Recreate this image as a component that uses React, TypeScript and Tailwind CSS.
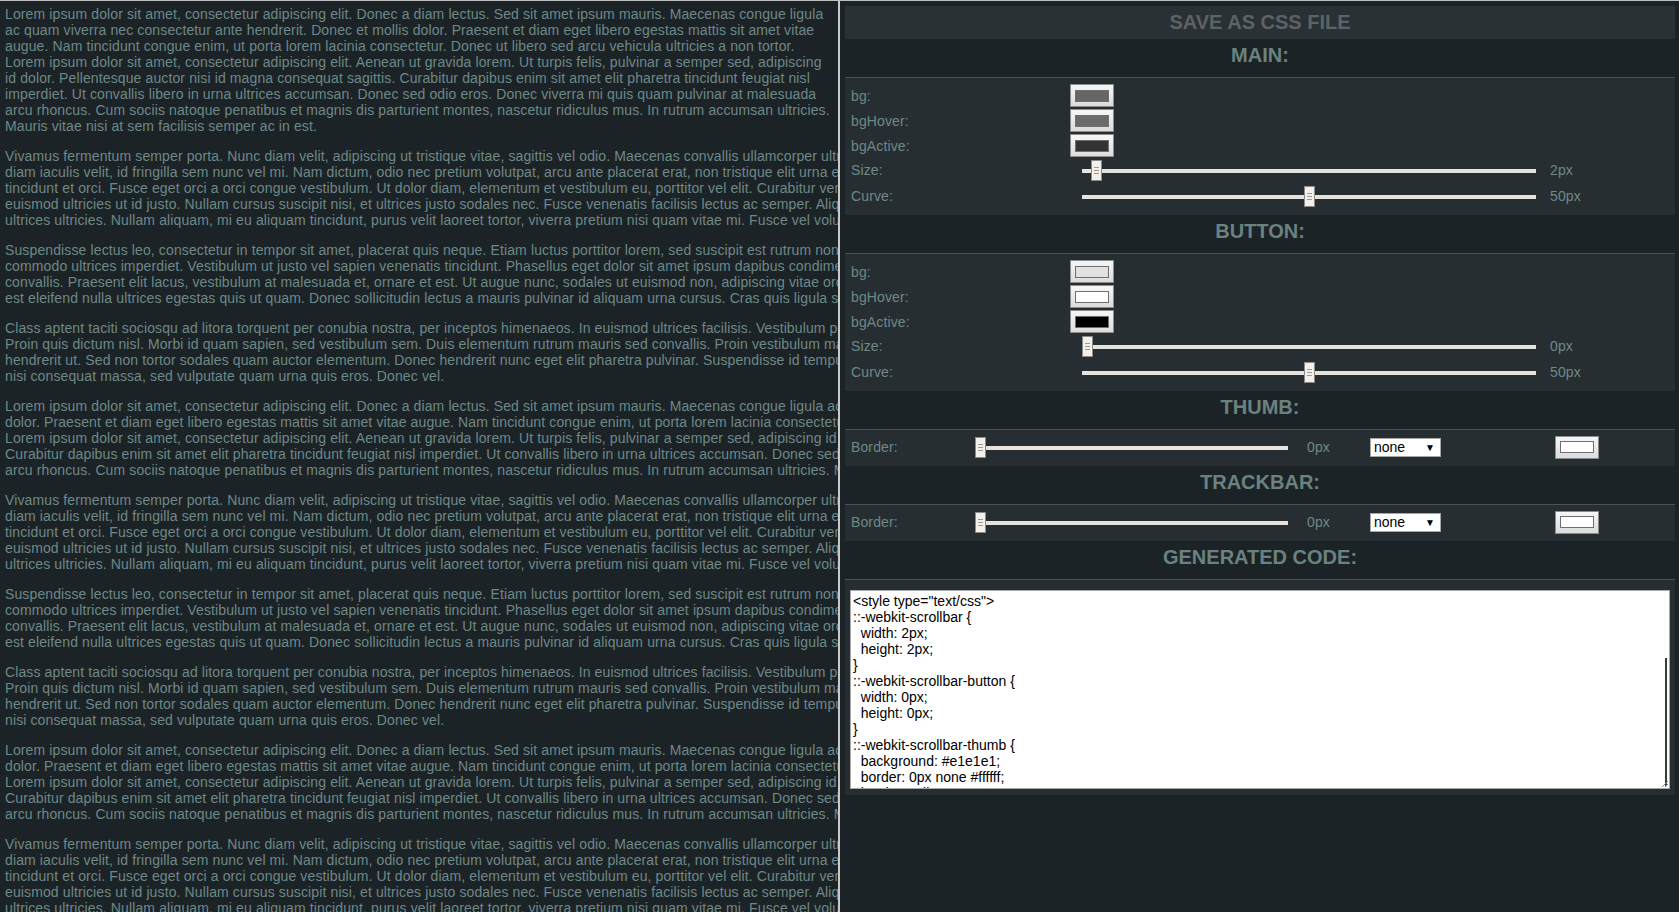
import React from 'react';

const P1 = [
  'Lorem ipsum dolor sit amet, consectetur adipiscing elit. Donec a diam lectus. Sed sit amet ipsum mauris. Maecenas congue ligula',
  'ac quam viverra nec consectetur ante hendrerit. Donec et mollis dolor. Praesent et diam eget libero egestas mattis sit amet vitae',
  'augue. Nam tincidunt congue enim, ut porta lorem lacinia consectetur. Donec ut libero sed arcu vehicula ultricies a non tortor.',
  'Lorem ipsum dolor sit amet, consectetur adipiscing elit. Aenean ut gravida lorem. Ut turpis felis, pulvinar a semper sed, adipiscing',
  'id dolor. Pellentesque auctor nisi id magna consequat sagittis. Curabitur dapibus enim sit amet elit pharetra tincidunt feugiat nisl',
  'imperdiet. Ut convallis libero in urna ultrices accumsan. Donec sed odio eros. Donec viverra mi quis quam pulvinar at malesuada',
  'arcu rhoncus. Cum sociis natoque penatibus et magnis dis parturient montes, nascetur ridiculus mus. In rutrum accumsan ultricies.',
  'Mauris vitae nisi at sem facilisis semper ac in est.',
];

const P2 = [
  'Vivamus fermentum semper porta. Nunc diam velit, adipiscing ut tristique vitae, sagittis vel odio. Maecenas convallis ullamcorper ultricies. Curabitur ornare, ligula semper consectetur sagittis, nisi',
  'diam iaculis velit, id fringilla sem nunc vel mi. Nam dictum, odio nec pretium volutpat, arcu ante placerat erat, non tristique elit urna et turpis. Quisque mi metus, ornare sit amet fermentum et,',
  'tincidunt et orci. Fusce eget orci a orci congue vestibulum. Ut dolor diam, elementum et vestibulum eu, porttitor vel elit. Curabitur venenatis pulvinar tellus gravida ornare. Sed et erat faucibus nunc',
  'euismod ultricies ut id justo. Nullam cursus suscipit nisi, et ultrices justo sodales nec. Fusce venenatis facilisis lectus ac semper. Aliquam at massa ipsum. Quisque bibendum purus convallis nulla',
  'ultrices ultricies. Nullam aliquam, mi eu aliquam tincidunt, purus velit laoreet tortor, viverra pretium nisi quam vitae mi. Fusce vel volutpat elit. Nam sagittis nisi dui.',
];

const P3 = [
  'Suspendisse lectus leo, consectetur in tempor sit amet, placerat quis neque. Etiam luctus porttitor lorem, sed suscipit est rutrum non. Curabitur lobortis nisl a enim congue semper. Aenean',
  'commodo ultrices imperdiet. Vestibulum ut justo vel sapien venenatis tincidunt. Phasellus eget dolor sit amet ipsum dapibus condimentum vitae quis lectus. Aliquam ut massa in turpis dapibus',
  'convallis. Praesent elit lacus, vestibulum at malesuada et, ornare et est. Ut augue nunc, sodales ut euismod non, adipiscing vitae orci. Mauris ut placerat justo. Mauris in ultricies enim. Quisque nec',
  'est eleifend nulla ultrices egestas quis ut quam. Donec sollicitudin lectus a mauris pulvinar id aliquam urna cursus. Cras quis ligula sem, vel elementum mi. Phasellus non ullamcorper urna.',
];

const P4 = [
  'Class aptent taciti sociosqu ad litora torquent per conubia nostra, per inceptos himenaeos. In euismod ultrices facilisis. Vestibulum porta sapien adipiscing augue congue id pretium lectus molestie.',
  'Proin quis dictum nisl. Morbi id quam sapien, sed vestibulum sem. Duis elementum rutrum mauris sed convallis. Proin vestibulum magna mi. Aenean tristique hendrerit magna, ac facilisis nulla',
  'hendrerit ut. Sed non tortor sodales quam auctor elementum. Donec hendrerit nunc eget elit pharetra pulvinar. Suspendisse id tempus tortor. Aenean luctus, elit commodo laoreet commodo, justo',
  'nisi consequat massa, sed vulputate quam urna quis eros. Donec vel.',
];

const P5 = [
  'Lorem ipsum dolor sit amet, consectetur adipiscing elit. Donec a diam lectus. Sed sit amet ipsum mauris. Maecenas congue ligula ac quam viverra nec consectetur ante hendrerit. Donec et mollis',
  'dolor. Praesent et diam eget libero egestas mattis sit amet vitae augue. Nam tincidunt congue enim, ut porta lorem lacinia consectetur. Donec ut libero sed arcu vehicula ultricies a non tortor.',
  'Lorem ipsum dolor sit amet, consectetur adipiscing elit. Aenean ut gravida lorem. Ut turpis felis, pulvinar a semper sed, adipiscing id dolor. Pellentesque auctor nisi id magna consequat sagittis.',
  'Curabitur dapibus enim sit amet elit pharetra tincidunt feugiat nisl imperdiet. Ut convallis libero in urna ultrices accumsan. Donec sed odio eros. Donec viverra mi quis quam pulvinar at malesuada',
  'arcu rhoncus. Cum sociis natoque penatibus et magnis dis parturient montes, nascetur ridiculus mus. In rutrum accumsan ultricies. Mauris vitae nisi at sem facilisis semper ac in est.',
];

const paragraphs = [P1, P2, P3, P4, P5, P2, P3, P4, P5, P2];

const codeLines = [
  '<style type="text/css">',
  '::-webkit-scrollbar {',
  '  width: 2px;',
  '  height: 2px;',
  '}',
  '::-webkit-scrollbar-button {',
  '  width: 0px;',
  '  height: 0px;',
  '}',
  '::-webkit-scrollbar-thumb {',
  '  background: #e1e1e1;',
  '  border: 0px none #ffffff;',
  '  border-radius: 50px;',
  '}',
];

const Swatch: React.FC<{ color: string }> = ({ color }) => (
  <div className="w-[44px] h-[23px] border border-[#8c8c8c] bg-gradient-to-b from-[#f7f7f7] to-[#dcdcdc] flex items-center justify-center">
    <div className="w-[34px] h-[12px] border border-[#6f6f6f]" style={{ background: color }} />
  </div>
);

const Slider: React.FC<{ value: number; width: number }> = ({ value, width }) => {
  const left = Math.round((value / 100) * (width - 11));
  return (
    <div className="relative h-[21px]" style={{ width }}>
      <div className="absolute left-0 right-0 top-[9px] h-[4px] bg-[#e7e3dc]" />
      <div
        className="absolute top-0 w-[11px] h-[21px] border border-[#8a8a8a] bg-[#f3f0ea] flex flex-col items-center justify-center gap-[2px]"
        style={{ left }}
      >
        <div className="w-[5px] h-px bg-[#9a9a9a]" />
        <div className="w-[5px] h-px bg-[#9a9a9a]" />
        <div className="w-[5px] h-px bg-[#9a9a9a]" />
      </div>
    </div>
  );
};

const Heading: React.FC<{ title: string }> = ({ title }) => (
  <div className="h-[38px] pt-[5px] text-center text-[20px] leading-[22px] font-bold text-[#6a8280]">{title}</div>
);

const ColorRow: React.FC<{ label: string; color: string }> = ({ label, color }) => (
  <div className="h-[25px] flex items-center">
    <div className="w-[225px] pl-[6px] tracking-[0.12px]">{label}</div>
    <Swatch color={color} />
  </div>
);

const SliderRow: React.FC<{ label: string; value: number }> = ({ label, value }) => (
  <div className="h-[26px] flex items-center">
    <div className="w-[237px] pl-[6px] tracking-[0.12px]">{label}</div>
    <Slider value={value} width={454} />
    <div className="pl-[14px] tracking-[0.12px]">{value}px</div>
  </div>
);

const Select: React.FC = () => (
  <div className="w-[71px] h-[19px] bg-white border border-[#a6a6a6] flex items-center justify-between pl-[3px] pr-[5px] text-black text-[14px] leading-[17px]">
    <span>none</span>
    <span className="text-[10px]">▼</span>
  </div>
);

const BorderRow: React.FC = () => (
  <div className="h-[24px] flex items-center">
    <div className="w-[130px] pl-[6px] tracking-[0.12px]">Border:</div>
    <Slider value={0} width={313} />
    <div className="w-[82px] pl-[19px] tracking-[0.12px]">0px</div>
    <Select />
    <div className="w-[114px]" />
    <Swatch color="#ffffff" />
  </div>
);

const Section: React.FC<{ children: React.ReactNode; className?: string }> = ({ children, className }) => (
  <div className={`border-t border-[#4a5254] bg-[#272e31] ${className ?? ''}`}>{children}</div>
);

export default function App() {
  return (
    <div
      className="w-full h-[912px] flex bg-[#1c2326] border-t border-[#bdbdbd] overflow-hidden text-[14px] leading-[16px] text-[#6e8888]"
      style={{ fontFamily: '"Liberation Sans", Arial, sans-serif' }}
    >
      <div className="w-[840px] shrink-0 h-full overflow-hidden border-r-2 border-[#c9c9c9] pl-[5px] pt-[5px] tracking-[0.12px]">
        {paragraphs.map((p, i) => (
          <div key={i} className="mb-[14px]">
            {p.map((line, j) => (
              <div key={j} className="whitespace-nowrap">{line}</div>
            ))}
          </div>
        ))}
      </div>

      <div className="flex-1 h-full pl-[5px] pr-[4px] pt-[5px]">
        <div className="h-[33px] bg-[#2a3134] text-center text-[20px] leading-[33px] font-bold text-[#5c6366]">SAVE AS CSS FILE</div>

        <Heading title="MAIN:" />
        <Section className="pt-[5px] pb-[6px]">
          <ColorRow label="bg:" color="#666666" />
          <ColorRow label="bgHover:" color="#6b6b6b" />
          <ColorRow label="bgActive:" color="#333333" />
          <div className="-mt-[1px]">
            <SliderRow label="Size:" value={2} />
            <SliderRow label="Curve:" value={50} />
          </div>
        </Section>

        <Heading title="BUTTON:" />
        <Section className="pt-[5px] pb-[6px]">
          <ColorRow label="bg:" color="#e1e1e1" />
          <ColorRow label="bgHover:" color="#ffffff" />
          <ColorRow label="bgActive:" color="#000000" />
          <div className="-mt-[1px]">
            <SliderRow label="Size:" value={0} />
            <SliderRow label="Curve:" value={50} />
          </div>
        </Section>

        <Heading title="THUMB:" />
        <Section className="pt-[5px] pb-[7px]">
          <BorderRow />
        </Section>

        <Heading title="TRACKBAR:" />
        <Section className="pt-[5px] pb-[7px]">
          <BorderRow />
        </Section>

        <Heading title="GENERATED CODE:" />
        <Section className="pt-[10px] pb-[6px] px-[5px]">
          <div className="relative h-[199px] bg-white border border-[#a9a9a9] overflow-hidden">
            <div className="pt-[2px] pl-[2px] text-black whitespace-pre">
              {codeLines.map((l, i) => (
                <div key={i}>{l}</div>
              ))}
            </div>
            <div className="absolute right-[2px] top-[67px] bottom-[2px] w-[2px] bg-[#3a3a3a]" />
            <svg className="absolute right-0 bottom-0" width="10" height="10" viewBox="0 0 10 10">
              <path d="M9 3 L3 9 M9 6 L6 9" stroke="#8a8a8a" strokeWidth="1" />
            </svg>
          </div>
        </Section>
      </div>
    </div>
  );
}
